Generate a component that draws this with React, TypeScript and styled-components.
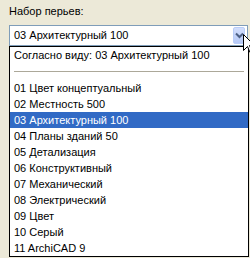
import React, { FC } from "react"
import styled, { createGlobalStyle } from "styled-components"

const GlobalStyle = createGlobalStyle`
  body {
    margin: 0;
    background: #ece9d8;
    font-family: "Liberation Sans", Arial, sans-serif;
    font-size: 11px;
    color: #000;
  }
`

const items = [
  "01 Цвет концептуальный",
  "02 Местность 500",
  "03 Архитектурный 100",
  "04 Планы зданий 50",
  "05 Детализация",
  "06 Конструктивный",
  "07 Механический",
  "08 Электрический",
  "09 Цвет",
  "10 Серый",
  "11 ArchiCAD 9",
]

const selected = "03 Архитектурный 100"

const App: FC = () => {
  return (
    <>
      <GlobalStyle />
      <Panel>
        <Label>Набор перьев:</Label>
        <ComboWrap>
          <Combo>
            <ComboText>{selected}</ComboText>
            <DropButton>
              <svg width="9" height="7" viewBox="0 0 9 7">
                <path d="M1 1.5 L4.5 5 L8 1.5" fill="none" stroke="#4d6185" strokeWidth="2" />
              </svg>
            </DropButton>
          </Combo>
          <List>
            <Row>Согласно виду: 03 Архитектурный 100</Row>
            <Separator />
            {items.map((item) => (
              <Row key={item} active={item === selected}>
                {item}
              </Row>
            ))}
          </List>
          <Cursor width="12" height="21" viewBox="0 0 12 21">
            <path
              d="M0.5 0.5 L0.5 16.5 L4.5 12.5 L7 18.5 L9 17.5 L6.5 11.5 L11.5 11.5 Z"
              fill="#fff"
              stroke="#000"
              strokeWidth="1"
            />
          </Cursor>
        </ComboWrap>
      </Panel>
    </>
  )
}

const Panel = styled.div`
  padding: 5px 1px 0 9px;
`

const Label = styled.div`
  height: 20px;
  line-height: 13px;
`

const ComboWrap = styled.div`
  position: relative;
  width: 240px;
`

const Combo = styled.div`
  display: flex;
  align-items: center;
  justify-content: space-between;
  box-sizing: border-box;
  width: 239px;
  height: 21px;
  border: 1px solid #7f9db9;
  background: #fff;
  padding: 0 2px 0 4px;
`

const ComboText = styled.span`
  line-height: 13px;
`

const DropButton = styled.div`
  display: flex;
  align-items: center;
  justify-content: center;
  box-sizing: border-box;
  width: 12px;
  height: 17px;
  border: 1px solid #b9cdf8;
  border-radius: 2px;
  background: linear-gradient(#d2defc, #b6c9f6);
`

const List = styled.div`
  border: 1px solid #000;
  background: #fff;
`

const Row = styled.div<{ active?: boolean }>`
  height: 16px;
  line-height: 16px;
  padding-left: 4px;
  white-space: nowrap;
  background: ${(p) => (p.active ? "#316ac5" : "#fff")};
  color: ${(p) => (p.active ? "#fff" : "#000")};
`

const Separator = styled.div`
  height: 17px;
  display: flex;
  align-items: center;
  &::after {
    content: "";
    flex: 1;
    margin: 0 4px;
    height: 1px;
    background: #aca899;
  }
`

const Cursor = styled.svg`
  position: absolute;
  left: 234px;
  top: 9px;
`

export default App
